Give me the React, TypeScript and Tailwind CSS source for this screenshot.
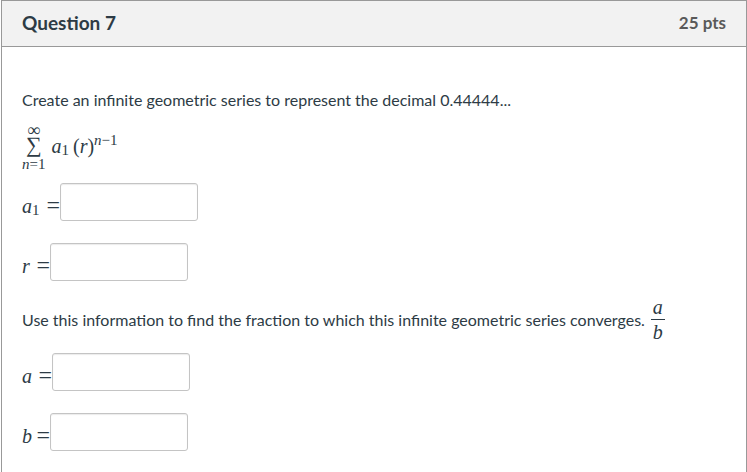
import type { ReactNode } from 'react';

interface AnswerFieldProps {
  id: string;
  width: string;
  children: ReactNode;
}

const mathFont = "font-['Liberation_Serif',serif]";

function AnswerField({ id, width, children }: AnswerFieldProps) {
  return (
    <div className="flex items-center">
      <label
        htmlFor={id}
        className={`${width} ${mathFont} flex items-baseline justify-between pt-1.5 text-xl leading-6`}
      >
        <span className="flex items-center">{children}</span>
        <span className="text-2xl leading-6">=</span>
      </label>
      <input
        id={id}
        type="text"
        className="h-[38px] w-[138px] rounded-[3px] border border-[#c4c4c4] bg-white px-2 text-base shadow-[inset_0_1px_1px_rgba(0,0,0,0.08)]"
      />
    </div>
  );
}

function SeriesFormula() {
  return (
    <div className={`${mathFont} flex items-center gap-1.5`}>
      <div className="flex flex-col items-center">
        <span className="h-3 text-lg leading-3">∞</span>
        <span className="h-5 text-[22px] leading-[18px]">∑</span>
        <span className="text-[15px] leading-4">
          <i>n</i>=1
        </span>
      </div>
      <div className="flex items-center pb-1 text-xl leading-6">
        <i>a</i>
        <span className="pt-2 pr-1 text-[15px] leading-4">1</span>
        <span>
          (<i>r</i>)
        </span>
        <span className="pb-3 text-[15px] leading-4">
          <i>n</i>−1
        </span>
      </div>
    </div>
  );
}

export default function App() {
  return (
    <div className="ml-px min-h-screen border-x border-t border-[#999999] bg-white font-['Lato',sans-serif] text-[#2d3b45]">
      <header className="flex h-[46px] items-center justify-between border-b border-[#999999] bg-[#f2f2f2] px-5 pb-0.5">
        <h1 className="text-[19px] leading-6 font-bold">Question 7</h1>
        <span className="text-[17px] leading-6 font-bold text-[#595959]">25 pts</span>
      </header>

      <main className="px-5 pt-[41px] text-base leading-6">
        <p>Create an infinite geometric series to represent the decimal 0.44444...</p>

        <div className="mt-3">
          <SeriesFormula />
        </div>

        <div className="mt-[11px] flex flex-col gap-[22px]">
          <AnswerField id="first-term" width="w-[38px]">
            <i>a</i>
            <span className="pt-2 text-[15px] leading-4">1</span>
          </AnswerField>
          <AnswerField id="ratio" width="w-7">
            <i>r</i>
          </AnswerField>
        </div>

        <div className="mt-3.5 mb-[9px] flex min-h-12 flex-wrap items-center gap-x-1.5">
          <p>Use this information to find the fraction to which this infinite geometric series converges.</p>
          <span className={`${mathFont} inline-flex flex-col text-center text-xl italic`}>
            <span className="border-b border-[#2d3b45] px-0.5 leading-6">a</span>
            <span className="leading-6">b</span>
          </span>
        </div>

        <div className="flex flex-col gap-[22px]">
          <AnswerField id="numerator" width="w-[30px]">
            <i>a</i>
          </AnswerField>
          <AnswerField id="denominator" width="w-7">
            <i>b</i>
          </AnswerField>
        </div>
      </main>
    </div>
  );
}
